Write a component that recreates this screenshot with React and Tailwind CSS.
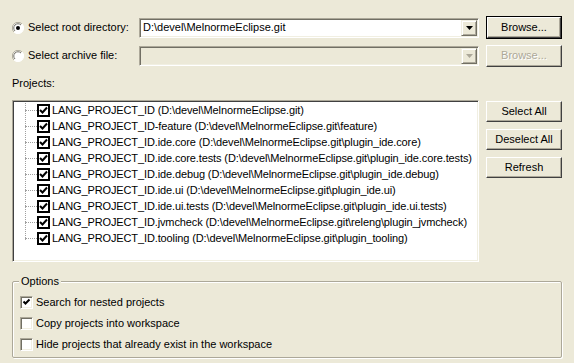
const projects = [
  ['LANG_PROJECT_ID', 'D:\\devel\\MelnormeEclipse.git'],
  ['LANG_PROJECT_ID-feature', 'D:\\devel\\MelnormeEclipse.git\\feature'],
  ['LANG_PROJECT_ID.ide.core', 'D:\\devel\\MelnormeEclipse.git\\plugin_ide.core'],
  ['LANG_PROJECT_ID.ide.core.tests', 'D:\\devel\\MelnormeEclipse.git\\plugin_ide.core.tests'],
  ['LANG_PROJECT_ID.ide.debug', 'D:\\devel\\MelnormeEclipse.git\\plugin_ide.debug'],
  ['LANG_PROJECT_ID.ide.ui', 'D:\\devel\\MelnormeEclipse.git\\plugin_ide.ui'],
  ['LANG_PROJECT_ID.ide.ui.tests', 'D:\\devel\\MelnormeEclipse.git\\plugin_ide.ui.tests'],
  ['LANG_PROJECT_ID.jvmcheck', 'D:\\devel\\MelnormeEclipse.git\\releng\\plugin_jvmcheck'],
  ['LANG_PROJECT_ID.tooling', 'D:\\devel\\MelnormeEclipse.git\\plugin_tooling'],
]

const options = [
  ['Search for nested projects', true],
  ['Copy projects into workspace', false],
  ['Hide projects that already exist in the workspace', false],
]

function Radio({ checked }) {
  return (
    <svg width="12" height="12" viewBox="0 0 12 12" className="shrink-0">
      <circle cx="6" cy="6" r="5.5" fill="#fff" />
      <path d="M10 2 A5.5 5.5 0 0 0 2 10" stroke="#aca899" strokeWidth="1" fill="none" />
      <path d="M9 3 A4.2 4.2 0 0 0 3 9" stroke="#716f64" strokeWidth="1" fill="none" />
      <path d="M2 10 A5.5 5.5 0 0 0 10 2" stroke="#fff" strokeWidth="1" fill="none" />
      {checked && <circle cx="6" cy="6" r="2" fill="#000" />}
    </svg>
  )
}

function Arrow({ disabled }) {
  return (
    <div className="flex h-[16px] w-[16px] shrink-0 items-center justify-center border border-t-[#f1efe2] border-l-[#f1efe2] border-r-[#716f64] border-b-[#716f64] bg-[#ece9d8] shadow-[inset_1px_1px_0_#fff,inset_-1px_-1px_0_#aca899]">
      <svg width="7" height="4" viewBox="0 0 7 4">
        <path d="M0 0 H7 L3.5 4 Z" fill={disabled ? '#aca899' : '#000'} />
      </svg>
    </div>
  )
}

function Combo({ value, disabled }) {
  return (
    <div
      className={`flex h-[20px] w-[340px] items-center justify-between border border-t-[#aca899] border-l-[#aca899] border-r-white border-b-white p-px shadow-[inset_1px_1px_0_#716f64,inset_-1px_-1px_0_#f1efe2] ${
        disabled ? 'bg-[#ece9d8]' : 'bg-white'
      }`}
    >
      <span className="pl-[2px] leading-none">{value}</span>
      <Arrow disabled={disabled} />
    </div>
  )
}

function Button({ children, isDefault, disabled, className = '' }) {
  const inner = (
    <div className="flex h-full w-full items-center justify-center border border-t-white border-l-white border-r-[#404040] border-b-[#404040] shadow-[inset_-1px_-1px_0_#aca899]">
      <span className={disabled ? 'text-[#aca899] [text-shadow:1px_1px_0_#fff]' : ''}>{children}</span>
    </div>
  )
  if (isDefault) {
    return <div className={`h-[23px] w-[76px] border border-black bg-[#ece9d8] ${className}`}>{inner}</div>
  }
  return <div className={`h-[22px] w-[76px] bg-[#ece9d8] ${className}`}>{inner}</div>
}

function TreeCheck() {
  return (
    <div className="flex h-[13px] w-[13px] shrink-0 items-center justify-center border-2 border-black bg-white">
      <svg width="9" height="9" viewBox="0 0 9 9">
        <path d="M1 4 L3.5 6.5 L8 1.5" stroke="#000" strokeWidth="2" fill="none" />
      </svg>
    </div>
  )
}

function OptCheck({ checked }) {
  return (
    <div className="flex h-[13px] w-[13px] shrink-0 items-center justify-center border border-t-[#aca899] border-l-[#aca899] border-r-white border-b-white bg-white shadow-[inset_1px_1px_0_#716f64,inset_-1px_-1px_0_#f1efe2]">
      {checked && (
        <svg width="9" height="9" viewBox="0 0 9 9">
          <path d="M1.5 3.5 L3.5 5.5 L7.5 1.5" stroke="#000" strokeWidth="2" fill="none" />
        </svg>
      )}
    </div>
  )
}

export default function App() {
  return (
    <div className="h-[363px] w-[574px] overflow-hidden bg-[#ece9d8] pl-[12px] pt-[16px] font-['Liberation_Sans',Arial,sans-serif] text-[11px] text-black">
      {/* source selection */}
      <div className="flex h-[23px] items-center">
        <div className="flex w-[127px] items-center gap-[4px]">
          <Radio checked />
          <span>Select root directory:</span>
        </div>
        <Combo value="D:\devel\MelnormeEclipse.git" />
        <Button isDefault className="ml-[7px]">Browse...</Button>
      </div>
      <div className="mt-[5px] flex h-[23px] items-center">
        <div className="flex w-[127px] items-center gap-[4px]">
          <Radio />
          <span>Select archive file:</span>
        </div>
        <Combo value="" disabled />
        <Button disabled className="ml-[7px]">Browse...</Button>
      </div>

      <p className="mt-[10px] leading-[13px]">Projects:</p>

      <div className="mt-[10px] flex">
        <div className="relative h-[162px] w-[467px] shrink-0 overflow-hidden border border-t-[#aca899] border-l-[#aca899] border-r-white border-b-white bg-white shadow-[inset_1px_1px_0_#404040,inset_-1px_-1px_0_#f1efe2]">
          <div className="absolute left-[12px] top-[2px] h-[137px] border-l border-dotted border-[#a0a0a0]" />
          <div className="pt-px">
            {projects.map(([name, path]) => (
              <div key={name} className="flex h-[16px] items-center whitespace-nowrap">
                <div className="ml-[12px] w-[12px] shrink-0 border-t border-dotted border-[#a0a0a0]" />
                <TreeCheck />
                <span className="ml-[2px] shrink-0 tracking-[-0.12px]">
                  {name} ({path})
                </span>
              </div>
            ))}
          </div>
        </div>
        <div className="ml-[7px] flex flex-col gap-[7px] pt-px">
          <Button className="!h-[21px]">Select All</Button>
          <Button className="!h-[21px]">Deselect All</Button>
          <Button className="!h-[21px]">Refresh</Button>
        </div>
      </div>

      {/* options group */}
      <div className="relative mt-[19px] h-[77px] w-[550px] rounded-[2px] border border-[#aca899] pl-[7px] pt-[14px] shadow-[inset_1px_1px_0_#fff,1px_1px_0_#fff]">
        <span className="absolute left-[6px] top-[-8px] bg-[#ece9d8] px-[2px] leading-[14px]">Options</span>
        <div className="flex flex-col gap-[8px]">
          {options.map(([label, checked]) => (
            <div key={label} className="flex h-[13px] items-center gap-[3px]">
              <OptCheck checked={checked} />
              <span>{label}</span>
            </div>
          ))}
        </div>
      </div>
    </div>
  )
}
